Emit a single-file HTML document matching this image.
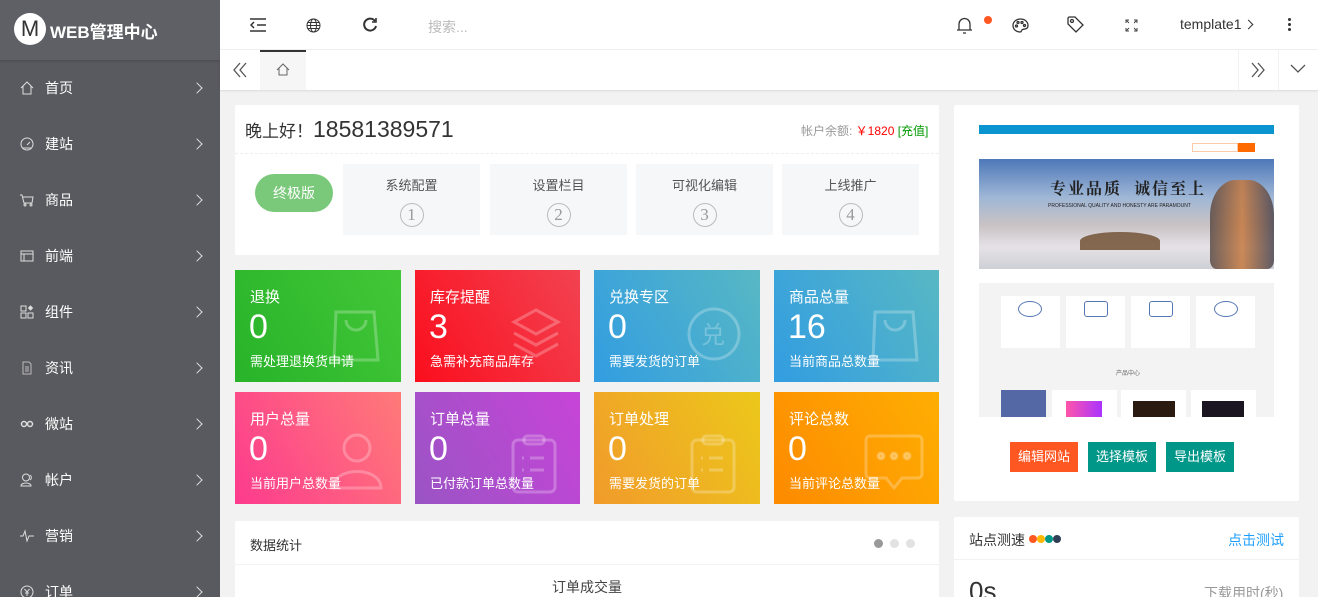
<!DOCTYPE html>
<html style="height:597px;overflow:hidden"><head><meta charset="utf-8"><style>
*{margin:0;padding:0;box-sizing:border-box}
body{width:1318px;height:597px;overflow:hidden;background:#f2f2f2;font-family:"Liberation Sans","Noto Sans CJK SC",sans-serif;position:relative;color:#333}
.abs{position:absolute}
#side{left:0;top:0;width:220px;height:597px;background:#595a5f}
#logo{left:0;top:0;width:220px;height:60px;background:#5f6066;box-shadow:0 1px 3px rgba(0,0,0,.2)}
.mi{position:absolute;left:0;width:220px;height:56px;color:#fff;font-size:14px}
.mi .ic{position:absolute;left:20px;top:50%;transform:translateY(-50%);width:14px;height:14px}
.mi .t{position:absolute;left:45px;top:50%;transform:translateY(-50%)}
.mi .ch{position:absolute;left:193px;top:50%;width:8px;height:8px;border-right:1.5px solid #ddd;border-top:1.5px solid #ddd;transform:translateY(-50%) rotate(45deg)}
.card{background:#fff;border-radius:2px}
.st{position:absolute;color:#fff;overflow:hidden}
.st .a{position:absolute;left:15px;top:16px;font-size:15px}
.st .b{position:absolute;left:14px;top:38px;font-size:34px}
.st .c{position:absolute;left:15px;top:81px;font-size:13px}
.st svg{position:absolute;left:95px;top:40px}
.step{position:absolute;top:164px;width:137px;height:71px;background:#f6f7f8;text-align:center;font-size:13px;color:#555;padding-top:11px}
.step span{display:inline-block;width:24px;height:24px;border:1px solid #bbb;border-radius:50%;font-size:17px;line-height:22px;color:#999;margin-top:9px;font-family:"Liberation Serif",serif}
.btn{position:absolute;top:442px;height:30px;color:#fff;font-size:13px;line-height:30px;text-align:center;width:68px}
</style></head><body>
<div id="side" class="abs"></div>
<div id="logo" class="abs">
 <div class="abs" style="left:14px;top:13px;width:32px;height:32px;border-radius:50%;background:#fff;color:#333;font-size:22px;text-align:center;line-height:32px">M</div>
 <div class="abs" style="left:50px;top:18px;color:#fff;font-size:17px;font-weight:bold">WEB管理中心</div>
</div>
<div class="mi" style="top:60px"><svg class="ic" viewBox="0 0 14 14" fill="none" stroke="#ddd"><path d="M1 7L7 1l6 6M3 5v8h8V5"/></svg><span class="t">首页</span><i class="ch"></i></div>
<div class="mi" style="top:116px"><svg class="ic" viewBox="0 0 14 14" fill="none" stroke="#ddd"><circle cx="7" cy="7" r="6"/><path d="M7 8l3-3M3 11h8"/></svg><span class="t">建站</span><i class="ch"></i></div>
<div class="mi" style="top:172px"><svg class="ic" viewBox="0 0 14 14" fill="none" stroke="#ddd"><path d="M0 2h2l2 8h8l1-6H3"/><circle cx="5" cy="12" r="1"/><circle cx="11" cy="12" r="1"/></svg><span class="t">商品</span><i class="ch"></i></div>
<div class="mi" style="top:228px"><svg class="ic" viewBox="0 0 14 14" fill="none" stroke="#ddd"><rect x="1" y="2" width="12" height="10"/><path d="M1 5h12M4 5v7"/></svg><span class="t">前端</span><i class="ch"></i></div>
<div class="mi" style="top:284px"><svg class="ic" viewBox="0 0 14 14" fill="none" stroke="#ddd"><rect x="1" y="1" width="5" height="5"/><rect x="1" y="8" width="5" height="5"/><rect x="8" y="8" width="5" height="5"/><path d="M10.5 1l2 2-2 2-2-2z" fill="#ddd"/></svg><span class="t">组件</span><i class="ch"></i></div>
<div class="mi" style="top:340px"><svg class="ic" viewBox="0 0 14 14" fill="none" stroke="#bbb"><path d="M3 1h6l2 2v10H3zM5 6h4M5 8h4M5 10h4"/></svg><span class="t">资讯</span><i class="ch"></i></div>
<div class="mi" style="top:396px"><svg class="ic" viewBox="0 0 14 14" fill="none" stroke="#ddd" stroke-width="1.5"><circle cx="4" cy="7" r="2.5"/><circle cx="10" cy="7" r="2.5"/></svg><span class="t">微站</span><i class="ch"></i></div>
<div class="mi" style="top:452px"><svg class="ic" viewBox="0 0 14 14" fill="none" stroke="#ddd"><circle cx="6" cy="4.5" r="3.5"/><path d="M1 13c0-4 10-4 10 0zM10 2a3 3 0 0 1 0 5"/></svg><span class="t">帐户</span><i class="ch"></i></div>
<div class="mi" style="top:508px"><svg class="ic" viewBox="0 0 14 14" fill="none" stroke="#ddd"><path d="M0 7h3l2-5 2 10 2-5h5"/></svg><span class="t">营销</span><i class="ch"></i></div>
<div class="mi" style="top:564px"><svg class="ic" viewBox="0 0 14 14" fill="none" stroke="#ddd"><circle cx="7" cy="7" r="6"/><path d="M4.5 4l2.5 3 2.5-3M7 7v4M5 8h4"/></svg><span class="t">订单</span><i class="ch"></i></div>

<div class="abs" style="left:220px;top:0;width:1098px;height:50px;background:#fff;border-bottom:1px solid #f0f0f0"></div>
<svg class="abs" style="left:250px;top:18px" width="16" height="14" fill="none" stroke="#333" stroke-width="1.5"><path d="M0 1h16M7 7h9M0 13h16M4 4L1 7l3 3"/></svg>
<svg class="abs" style="left:306px;top:18px" width="15" height="15" fill="none" stroke="#333"><circle cx="7.5" cy="7.5" r="6.5"/><ellipse cx="7.5" cy="7.5" rx="3" ry="6.5"/><path d="M1 7.5h13M2 4.5h11M2 10.5h11"/></svg>
<svg class="abs" style="left:362px;top:17px" width="16" height="16" fill="none" stroke="#333" stroke-width="2"><path d="M13 4A6 6 0 1 0 14 9"/><path d="M14 1v4h-4" stroke-width="1.6"/></svg>
<div class="abs" style="left:428px;top:17px;font-size:14px;color:#bbb">搜索...</div>
<svg class="abs" style="left:957px;top:17px" width="15" height="17" fill="none" stroke="#333" stroke-width="1.3"><path d="M2 13V7a5.5 5.5 0 0 1 11 0v6zM0 13h15M6 16h3M7.5 1v1"/></svg>
<div class="abs" style="left:984px;top:16px;width:8px;height:8px;border-radius:50%;background:#ff5722"></div>
<svg class="abs" style="left:1012px;top:18px" width="17" height="15" fill="none" stroke="#333" stroke-width="1.3"><path d="M8.5 1C4 1 1 4 1 7.5S4 14 8 14c2 0 1-2 2.5-2.5C13 11 16 11 16 7.5 16 4 13 1 8.5 1z"/><circle cx="4.5" cy="8" r="1"/><circle cx="6" cy="4.5" r="1"/><circle cx="10" cy="4.5" r="1"/><circle cx="12.5" cy="7.5" r="1"/></svg>
<svg class="abs" style="left:1067px;top:16px" width="17" height="17" fill="none" stroke="#333" stroke-width="1.3"><path d="M1 2v6l8 8 7-7-8-8H2z"/><circle cx="5" cy="5" r="1.5"/></svg>
<svg class="abs" style="left:1125px;top:19px" width="13" height="13" fill="none" stroke="#444"><path d="M1 4V1h3M9 1h3v3M12 9v3H9M4 12H1V9M1 1l3 3M12 1L9 4M12 12L9 9M1 12l3-3"/></svg>
<div class="abs" style="left:1180px;top:16px;font-size:14px;color:#333">template1</div>
<div class="abs" style="left:1245px;top:21px;width:7px;height:7px;border-right:1.3px solid #333;border-top:1.3px solid #333;transform:rotate(45deg)"></div>
<div class="abs" style="left:1288px;top:18px;width:3px;font-size:0"><div style="width:3px;height:3px;background:#333;border-radius:50%;margin-bottom:2px"></div><div style="width:3px;height:3px;background:#333;border-radius:50%;margin-bottom:2px"></div><div style="width:3px;height:3px;background:#333;border-radius:50%"></div></div>

<div class="abs" style="left:220px;top:50px;width:1098px;height:40px;background:#fff;box-shadow:0 1px 2px rgba(0,0,0,.1)"></div>
<svg class="abs" style="left:232px;top:62px" width="16" height="16" fill="none" stroke="#555" stroke-width="1.3"><path d="M8 1L2 8l6 7M14 1L8 8l6 7"/></svg>
<div class="abs" style="left:260px;top:50px;width:46px;height:40px;background:#f6f6f6;border-top:2px solid #333"></div>
<svg class="abs" style="left:276px;top:63px" width="14" height="13" fill="none" stroke="#666"><path d="M1 7L7 1l6 6M3 5v7h8V5"/></svg>
<div class="abs" style="left:1238px;top:50px;width:1px;height:40px;background:#f0f0f0"></div>
<div class="abs" style="left:1278px;top:50px;width:1px;height:40px;background:#f0f0f0"></div>
<svg class="abs" style="left:1250px;top:62px" width="16" height="16" fill="none" stroke="#555" stroke-width="1.3"><path d="M2 1l6 7-6 7M8 1l6 7-6 7"/></svg>
<svg class="abs" style="left:1290px;top:64px" width="16" height="10" fill="none" stroke="#555" stroke-width="1.3"><path d="M1 1l7 7 7-7"/></svg>

<div class="abs card" style="left:235px;top:105px;width:704px;height:150px"></div>
<div class="abs" style="left:245px;top:116px;font-size:17px;color:#333">晚上好！<span style="font-size:23px">18581389571</span></div>
<div class="abs" style="left:801px;top:122px;font-size:12px;color:#999">帐户余额: <span style="color:#f00">￥1820</span> <span style="color:#090">[充值]</span></div>
<div class="abs" style="left:235px;top:153px;width:704px;border-top:1px dashed #eee"></div>
<div class="abs" style="left:255px;top:174px;width:78px;height:38px;border-radius:19px;background:#7ac97a;color:#fff;font-size:14px;text-align:center;line-height:38px">终极版</div>
<div class="step" style="left:343px">系统配置<br><span>1</span></div>
<div class="step" style="left:490px">设置栏目<br><span>2</span></div>
<div class="step" style="left:636px">可视化编辑<br><span>3</span></div>
<div class="step" style="left:782px">上线推广<br><span>4</span></div>

<div class="st" style="left:235px;top:270px;width:166px;height:112px;background:linear-gradient(60deg,#28b32a,#43c737)"><div class="a">退换</div><div class="b">0</div><div class="c">需处理退换货申请</div><svg width="52" height="52" fill="none" stroke="rgba(255,255,255,.25)" stroke-width="3"><path d="M6 2h38l4 48H4z"/><path d="M16 10a10 10 0 0 0 20 0"/></svg></div>
<div class="st" style="left:415px;top:270px;width:165px;height:112px;background:linear-gradient(60deg,#fb0e1d,#f24251)"><div class="a">库存提醒</div><div class="b">3</div><div class="c">急需补充商品库存</div><svg width="52" height="60" style="top:36px" fill="none" stroke="rgba(255,255,255,.25)" stroke-width="3"><path d="M26 4l22 12-22 12L4 16z"/><path d="M4 27l22 12 22-12M4 38l22 12 22-12"/></svg></div>
<div class="st" style="left:594px;top:270px;width:166px;height:112px;background:linear-gradient(60deg,#329de1,#58b8c4)"><div class="a">兑换专区</div><div class="b">0</div><div class="c">需要发货的订单</div><svg width="56" height="56" style="left:92px;top:36px" fill="none" stroke="rgba(255,255,255,.25)" stroke-width="3"><circle cx="28" cy="28" r="25"/><text x="15" y="37" font-size="24" fill="rgba(255,255,255,.25)" stroke="none" font-family="Noto Sans CJK SC">兑</text></svg></div>
<div class="st" style="left:774px;top:270px;width:165px;height:112px;background:linear-gradient(60deg,#329de1,#58b8c4)"><div class="a">商品总量</div><div class="b">16</div><div class="c">当前商品总数量</div><svg width="52" height="52" fill="none" stroke="rgba(255,255,255,.25)" stroke-width="3"><path d="M6 2h38l4 48H4z"/><path d="M16 10a10 10 0 0 0 20 0"/></svg></div>
<div class="st" style="left:235px;top:392px;width:166px;height:112px;background:linear-gradient(60deg,#fd3b8e,#fe7a78)"><div class="a">用户总量</div><div class="b">0</div><div class="c">当前用户总数量</div><svg width="54" height="58" style="top:40px" fill="none" stroke="rgba(255,255,255,.25)" stroke-width="3"><circle cx="27" cy="16" r="13"/><path d="M3 56c0-22 48-22 48 0z"/></svg></div>
<div class="st" style="left:415px;top:392px;width:165px;height:112px;background:linear-gradient(60deg,#9a54c4,#c744d8)"><div class="a">订单总量</div><div class="b">0</div><div class="c">已付款订单总数量</div><svg width="48" height="60" style="top:42px" fill="none" stroke="rgba(255,255,255,.25)" stroke-width="3"><rect x="3" y="6" width="42" height="52" rx="5"/><rect x="14" y="2" width="20" height="8" rx="3"/><path d="M12 24h2M20 24h14M12 36h2M20 36h14"/></svg></div>
<div class="st" style="left:594px;top:392px;width:166px;height:112px;background:linear-gradient(60deg,#f19b2b,#ecc81a)"><div class="a">订单处理</div><div class="b">0</div><div class="c">需要发货的订单</div><svg width="48" height="60" style="top:42px" fill="none" stroke="rgba(255,255,255,.25)" stroke-width="3"><rect x="3" y="6" width="42" height="52" rx="5"/><rect x="14" y="2" width="20" height="8" rx="3"/><path d="M12 24h2M20 24h14M12 36h2M20 36h14"/></svg></div>
<div class="st" style="left:774px;top:392px;width:165px;height:112px;background:linear-gradient(60deg,#fd8a00,#feae03)"><div class="a">评论总数</div><div class="b">0</div><div class="c">当前评论总数量</div><svg width="60" height="58" style="left:90px;top:42px" fill="none" stroke="rgba(255,255,255,.25)" stroke-width="3"><path d="M6 2h48a4 4 0 0 1 4 4v34a4 4 0 0 1-4 4H38l-8 10-8-10H6a4 4 0 0 1-4-4V6a4 4 0 0 1 4-4z"/><circle cx="17" cy="22" r="3" fill="rgba(255,255,255,.25)"/><circle cx="30" cy="22" r="3" fill="rgba(255,255,255,.25)"/><circle cx="43" cy="22" r="3" fill="rgba(255,255,255,.25)"/></svg></div>

<div class="abs card" style="left:235px;top:521px;width:704px;height:80px"></div>
<div class="abs" style="left:250px;top:535px;font-size:13px;color:#333">数据统计</div>
<div class="abs" style="left:874px;top:539px;width:9px;height:9px;border-radius:50%;background:#999"></div>
<div class="abs" style="left:890px;top:539px;width:9px;height:9px;border-radius:50%;background:#e2e2e2"></div>
<div class="abs" style="left:906px;top:539px;width:9px;height:9px;border-radius:50%;background:#e2e2e2"></div>
<div class="abs" style="left:235px;top:564px;width:704px;border-top:1px solid #f2f2f2"></div>
<div class="abs" style="left:552px;top:577px;font-size:14px;color:#444">订单成交量</div>

<div class="abs card" style="left:954px;top:105px;width:345px;height:396px"></div>
<div class="abs" style="left:979px;top:125px;width:295px;height:9px;background:#0a94d0"></div>
<div class="abs" style="left:1192px;top:143px;width:46px;height:9px;border:1px solid #f9c9a9;background:#fff"></div>
<div class="abs" style="left:1238px;top:143px;width:17px;height:9px;background:#ff6a00"></div>
<div class="abs" style="left:979px;top:159px;width:295px;height:110px;background:linear-gradient(180deg,#4e78b9 0%,#9fb7d6 35%,#c9c2c4 60%,#e5e2e6 80%,#cfd0d6 100%)"></div>
<div class="abs" style="left:1080px;top:232px;width:80px;height:18px;background:#6b4a2a;border-radius:50% 50% 0 0;opacity:.8"></div>
<div class="abs" style="left:1210px;top:180px;width:64px;height:89px;background:linear-gradient(90deg,#5a4a45,#c77a40,#4a4550);border-radius:40% 40% 10% 10%;opacity:.85"></div>
<div class="abs" style="left:1050px;top:176px;font-size:16px;color:#222;font-family:'Noto Serif CJK SC',serif;font-weight:bold;letter-spacing:2px">专业品质 &nbsp;诚信至上</div>
<div class="abs" style="left:1048px;top:203px;font-size:5px;color:#222">PROFESSIONAL QUALITY AND HONESTY ARE PARAMOUNT</div>
<div class="abs" style="left:979px;top:283px;width:295px;height:134px;background:#f3f3f3"></div>
<div class="abs" style="left:1001px;top:296px;width:59px;height:52px;background:#fff"></div>
<div class="abs" style="left:1066px;top:296px;width:59px;height:52px;background:#fff"></div>
<div class="abs" style="left:1131px;top:296px;width:59px;height:52px;background:#fff"></div>
<div class="abs" style="left:1196px;top:296px;width:59px;height:52px;background:#fff"></div>
<div class="abs" style="left:1018px;top:301px;width:24px;height:16px;border:1.5px solid #5677b5;border-radius:50%"></div>
<div class="abs" style="left:1084px;top:301px;width:24px;height:16px;border:1.5px solid #5677b5;border-radius:3px"></div>
<div class="abs" style="left:1149px;top:301px;width:24px;height:16px;border:1.5px solid #5677b5;border-radius:3px"></div>
<div class="abs" style="left:1214px;top:301px;width:24px;height:16px;border:1.5px solid #5677b5;border-radius:50%"></div>
<div class="abs" style="left:1116px;top:368px;font-size:6px;color:#666">产品中心</div>
<div class="abs" style="left:1001px;top:390px;width:45px;height:27px;background:#5468a6"></div>
<div class="abs" style="left:1052px;top:390px;width:65px;height:27px;background:#fff"></div>
<div class="abs" style="left:1121px;top:390px;width:65px;height:27px;background:#fff"></div>
<div class="abs" style="left:1191px;top:390px;width:65px;height:27px;background:#fff"></div>
<div class="abs" style="left:1066px;top:401px;width:36px;height:16px;background:linear-gradient(90deg,#f5a,#a3f)"></div>
<div class="abs" style="left:1133px;top:401px;width:42px;height:16px;background:#2a1a10"></div>
<div class="abs" style="left:1202px;top:401px;width:42px;height:16px;background:#1a1520"></div>
<div class="btn" style="left:1010px;background:#ff5722">编辑网站</div>
<div class="btn" style="left:1088px;background:#009688">选择模板</div>
<div class="btn" style="left:1166px;background:#009688">导出模板</div>

<div class="abs card" style="left:954px;top:517px;width:345px;height:90px"></div>
<div class="abs" style="left:969px;top:530px;font-size:14px;color:#333">站点测速</div>
<div class="abs" style="left:1029px;top:535px;width:8px;height:8px;border-radius:50%;background:#ff5722"></div>
<div class="abs" style="left:1037px;top:535px;width:8px;height:8px;border-radius:50%;background:#ffb800"></div>
<div class="abs" style="left:1045px;top:535px;width:8px;height:8px;border-radius:50%;background:#009688"></div>
<div class="abs" style="left:1053px;top:535px;width:8px;height:8px;border-radius:50%;background:#2f4056"></div>
<div class="abs" style="left:1228px;top:530px;font-size:14px;color:#1e9fff">点击测试</div>
<div class="abs" style="left:954px;top:559px;width:345px;border-top:1px solid #f2f2f2"></div>
<div class="abs" style="left:969px;top:576px;font-size:26px;color:#333">0s</div>
<div class="abs" style="left:1204px;top:583px;font-size:14px;color:#999">下载用时(秒)</div>
</body></html>
